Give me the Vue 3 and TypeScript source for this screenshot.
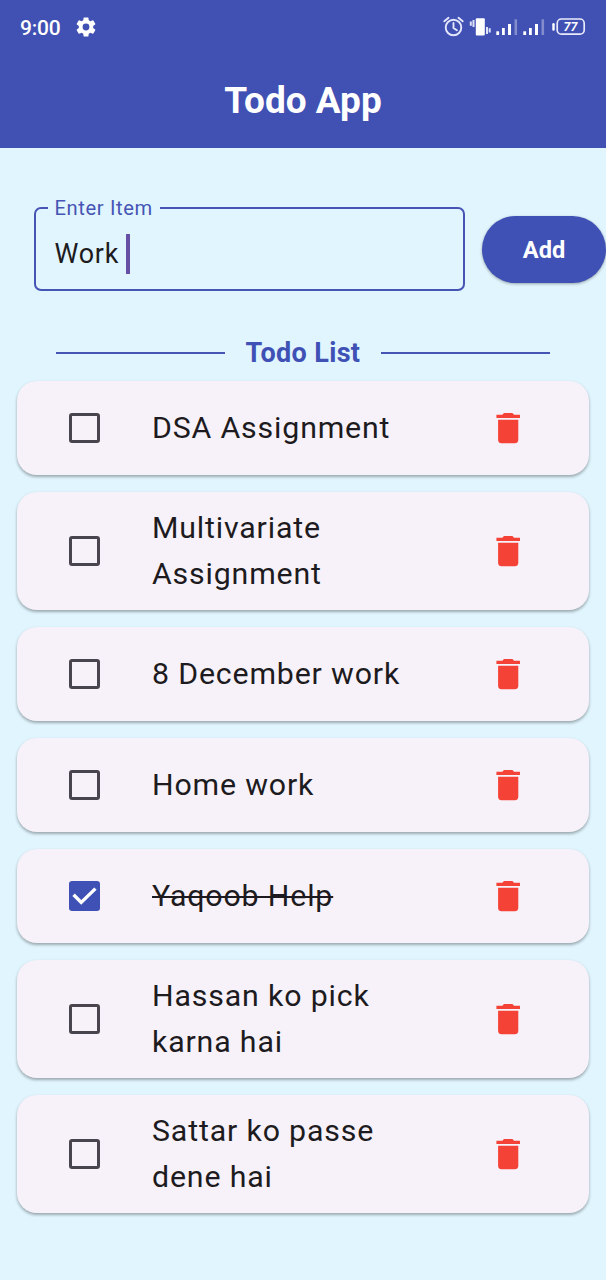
<script setup lang="ts">
import { ref } from 'vue'

interface Todo {
  id: number
  lines: string[]
  done: boolean
}

const draft = ref('Work ')

const todos = ref<Todo[]>([
  { id: 1, lines: ['DSA Assignment'], done: false },
  { id: 2, lines: ['Multivariate', 'Assignment'], done: false },
  { id: 3, lines: ['8 December work'], done: false },
  { id: 4, lines: ['Home work'], done: false },
  { id: 5, lines: ['Yaqoob Help'], done: true },
  { id: 6, lines: ['Hassan ko pick', 'karna hai'], done: false },
  { id: 7, lines: ['Sattar ko passe', 'dene hai'], done: false },
])

let nextId = 8

function add() {
  const text = draft.value.trim()
  if (!text) return
  todos.value.push({ id: nextId++, lines: [text], done: false })
  draft.value = ''
}

function remove(id: number) {
  todos.value = todos.value.filter((t) => t.id !== id)
}
</script>

<template>
  <div class="screen">
    <header class="top">
      <div class="status">
        <span class="clock">9:00</span>
        <svg class="gear" viewBox="0 0 24 24" fill="#fff">
          <path d="M19.14 12.94c.04-.3.06-.61.06-.94s-.02-.64-.07-.94l2.03-1.58a.49.49 0 0 0 .12-.61l-1.92-3.32a.49.49 0 0 0-.59-.22l-2.39.96a7 7 0 0 0-1.62-.94l-.36-2.54a.48.48 0 0 0-.48-.41h-3.84a.48.48 0 0 0-.47.41l-.36 2.54c-.59.24-1.13.57-1.62.94l-2.39-.96a.48.48 0 0 0-.59.22L2.74 8.87a.47.47 0 0 0 .12.61l2.03 1.58c-.05.3-.09.63-.09.94s.02.64.07.94l-2.03 1.58a.49.49 0 0 0-.12.61l1.92 3.32c.12.22.37.29.59.22l2.39-.96c.5.38 1.03.7 1.62.94l.36 2.54c.05.24.24.41.48.41h3.84c.24 0 .44-.17.47-.41l.36-2.54a6.8 6.8 0 0 0 1.62-.94l2.39.96c.22.08.47 0 .59-.22l1.92-3.32a.47.47 0 0 0-.12-.61l-2.01-1.58zM12 15.4A3.4 3.4 0 1 1 12 8.600a3.400 3.400 0 0 1 0 6.800z" />
        </svg>
        <svg class="indicators" width="150" height="24" viewBox="0 0 150 24">
          <g fill="none" stroke="#e4e7fb" stroke-width="1.9" stroke-linecap="round">
            <circle cx="17.500" cy="12.500" r="7.800" />
            <path d="M17.500 8v5l3.400 2.200M8.300 6.300l4.200-3.500M26.700 6.300l-4.200-3.500" />
          </g>
          <rect x="39.800" y="3.300" width="9" height="17.200" rx="1" fill="#fff" />
          <path d="M37.500 5v7M34.800 6.500v4.200M51 12v7M53.700 13.300v4.200" fill="none" stroke="#dfe3fa" stroke-width="2" />
          <g fill="#fff">
            <rect x="60.300" y="16.300" width="2.800" height="3.700" />
            <rect x="66" y="13" width="2.800" height="7" />
            <rect x="72" y="9" width="3" height="11" />
            <rect x="78.500" y="4.300" width="2.600" height="15.700" opacity=".35" />
            <rect x="87.300" y="16.300" width="2.800" height="3.700" />
            <rect x="93" y="13" width="2.800" height="7" />
            <rect x="99" y="9" width="3" height="11" />
            <rect x="105.500" y="4.300" width="2.600" height="15.700" opacity=".35" />
            <rect x="116.300" y="8" width="2.400" height="7.800" rx="1.200" />
          </g>
          <rect x="121.200" y="4" width="27" height="15.200" rx="4.200" fill="none" stroke="#e8ebfc" stroke-width="1.700" />
          <text x="134.500" y="16.100" text-anchor="middle" class="battery">77</text>
        </svg>
      </div>
      <h1 class="title">Todo App</h1>
    </header>

    <form class="entry" @submit.prevent="add">
      <fieldset class="field">
        <legend class="label">Enter Item</legend>
        <div class="value"><span class="typed">{{ draft }}</span><i class="caret"></i></div>
      </fieldset>
      <button class="add" type="submit">Add</button>
    </form>

    <div class="heading">
      <span class="rule"></span>
      <h2 class="subtitle">Todo List</h2>
      <span class="rule"></span>
    </div>

    <ul class="list">
      <li v-for="todo in todos" :key="todo.id" class="card" :class="{ tall: todo.lines.length > 1 }">
        <span class="box" :class="{ checked: todo.done }" @click="todo.done = !todo.done">
          <svg v-if="todo.done" viewBox="0 0 18 18" fill="none" stroke="#fff" stroke-width="2">
            <path d="M2.700 8.100l4.500 4.500 8.400-8.100" />
          </svg>
        </span>
        <span class="text" :class="{ done: todo.done }">
          <span v-for="line in todo.lines" :key="line" class="line">{{ line }}</span>
        </span>
        <svg class="trash" viewBox="0 0 24 24" fill="#f44336" @click="remove(todo.id)">
          <path d="M6 19c0 1.100.9 2 2 2h8c1.100 0 2-.9 2-2V7H6v12zM19 4h-3.500l-1-1h-5l-1 1H5v2h14V4z" />
        </svg>
      </li>
    </ul>
  </div>
</template>

<style>
body {
  margin: 0;
  background: #e1f5fe;
}
</style>

<style scoped>
.screen {
  width: 606px;
  height: 1280px;
  overflow: hidden;
  background: #e1f5fe;
  font-family: Roboto, "Liberation Sans", sans-serif;
  color: #1d1b20;
}
.top {
  height: 148px;
  background: #4150b3;
  color: #fff;
}
.status {
  height: 54px;
  padding: 0 20px;
  display: flex;
  align-items: center;
}
.clock {
  width: 54px;
  padding-top: 1px;
  font-size: 21px;
  font-weight: 500;
  letter-spacing: -0.2px;
}
.gear {
  width: 24px;
  height: 24px;
}
.indicators {
  margin-left: auto;
}
.battery {
  font-size: 12.5px;
  font-weight: 700;
  font-style: italic;
  fill: #fff;
}
.title {
  margin: 0;
  height: 93px;
  line-height: 93px;
  text-align: center;
  font-size: 37px;
  font-weight: 700;
}
.entry {
  display: flex;
  align-items: center;
  gap: 17px;
  height: 96px;
  margin: 47px 0 0 34px;
}
.field {
  box-sizing: border-box;
  width: 431px;
  height: 96px;
  min-width: 0;
  margin: 0;
  padding: 0 0 0 12px;
  border: 2px solid #4655b4;
  border-radius: 7px;
}
.label {
  padding: 0 7px 0 6.5px;
  height: 25px;
  line-height: 26px;
  font-size: 20.2px;
  letter-spacing: 0.6px;
  color: #4655b4;
}
.value {
  display: flex;
  align-items: center;
  height: 42px;
  margin: 0 0 0 6.5px;
  padding-top: 13px;
  font-size: 26.9px;
  letter-spacing: 0.75px;
}
.typed {
  white-space: pre;
}
.caret {
  width: 3.5px;
  height: 40px;
  background: #6750a4;
}
.add {
  width: 124px;
  height: 67px;
  flex: none;
  padding: 0;
  margin-top: 13px;
  border: 0;
  border-radius: 34px;
  background: #3f51b5;
  box-shadow: 0 1px 3px rgba(0, 0, 0, 0.35);
  color: #fff;
  font: 700 23.6px Roboto, "Liberation Sans", sans-serif;
}
.heading {
  display: flex;
  align-items: center;
  justify-content: space-between;
  height: 40px;
  margin: 42px 56px 0;
}
.rule {
  width: 169px;
  height: 2px;
  background: #4655b4;
}
.subtitle {
  margin: 0;
  font-size: 27px;
  font-weight: 700;
  letter-spacing: 0.35px;
  color: #3f51b5;
}
.list {
  list-style: none;
  margin: 7.8px 17px 0;
  padding: 0;
  display: flex;
  flex-direction: column;
  gap: 17px;
}
.card {
  box-sizing: border-box;
  height: 94px;
  padding: 0 60.5px 0 52px;
  display: flex;
  align-items: center;
  border-radius: 20px;
  background: #f7f2fa;
  box-shadow: 0 2px 3px rgba(0, 0, 0, 0.28), 0 1px 4px rgba(0, 0, 0, 0.06);
}
.card.tall {
  height: 118px;
}
.box {
  box-sizing: border-box;
  width: 30.5px;
  height: 30.5px;
  margin-right: 52.5px;
  border: 3px solid #49454f;
  border-radius: 3px;
}
.box.checked {
  border: 0;
  background: #3f51b5;
}
.box svg {
  display: block;
  width: 100%;
  height: 100%;
}
.text {
  flex: 1;
  font-size: 30.3px;
  line-height: 45.5px;
  letter-spacing: 0.84px;
}
.line {
  display: block;
}
.done .line {
  width: max-content;
  text-decoration: line-through;
  text-decoration-thickness: 1.6px;
}
.trash {
  width: 40.4px;
  height: 40.4px;
}
</style>
